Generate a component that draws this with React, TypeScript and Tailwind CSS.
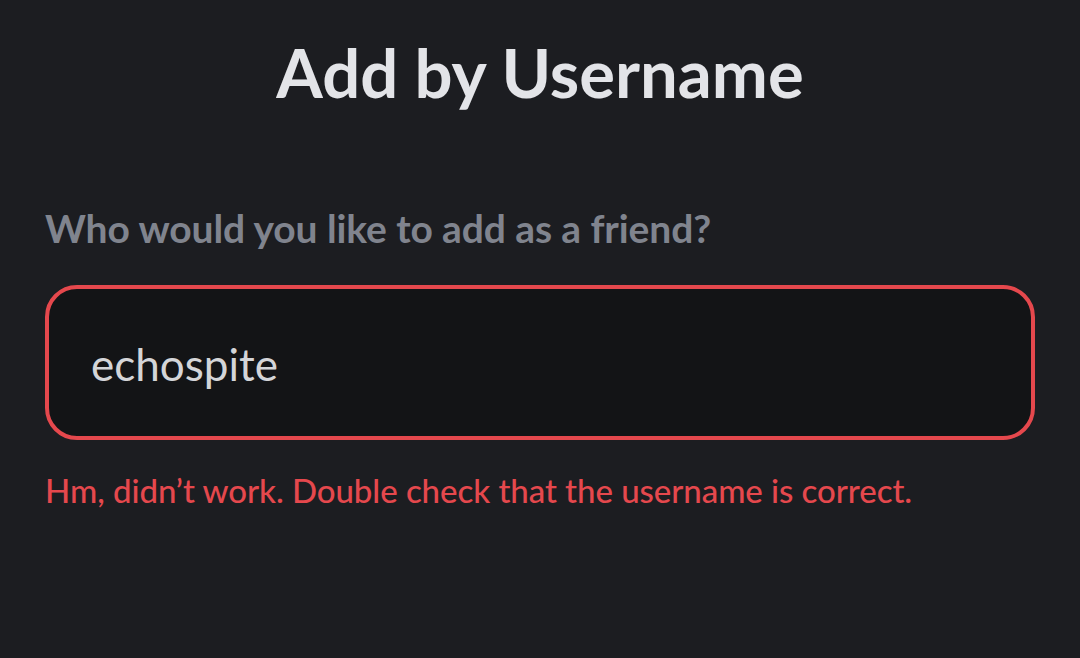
export default function App() {
  return (
    <div className="w-[1080px] h-[658px] bg-[#1c1d21] overflow-hidden" style={{ fontFamily: 'Lato, "Noto Sans", sans-serif' }}>
      <div className="pt-[28px] flex justify-center">
        <h1 className="text-[67px] leading-[88px] font-bold text-[#e3e4e8]">Add by Username</h1>
      </div>
      <div className="px-[45px] pt-[84px]">
        <div className="text-[39px] leading-[56px] font-bold text-[#80848e] tracking-[-0.1px]">Who would you like to add as a friend?</div>
        <div className="mt-[29px] h-[155px] rounded-[32px] border-[4px] border-[#e5484d] bg-[#131416] flex items-center pl-[42px]">
          <span className="text-[44px] text-[#d4d5d8] pt-[2px]">echospite</span>
        </div>
        <div className="mt-[28px] text-[33px] leading-[44px] font-medium text-[#e5484d] tracking-[-0.05px]">Hm, didn’t work. Double check that the username is correct.</div>
      </div>
    </div>
  );
}
